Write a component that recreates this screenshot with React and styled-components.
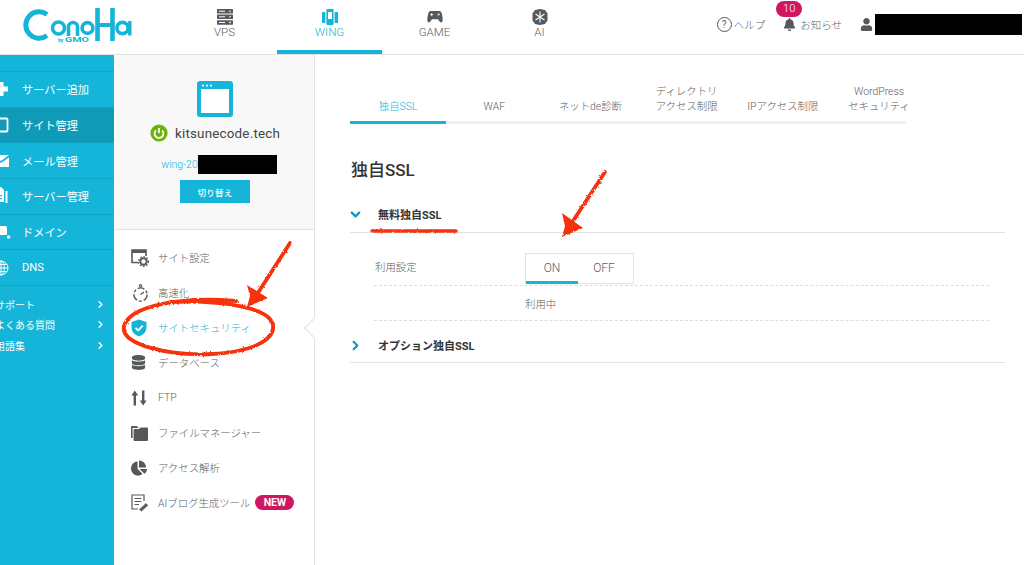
import React from "react";
import styled, { createGlobalStyle } from "styled-components";
import { FaBell, FaUser, FaDatabase, FaChartPie } from "react-icons/fa";
import { FiChevronRight, FiChevronDown } from "react-icons/fi";

const BLUE = "#14b5d8";
const GREY = "#55595c";
const TEXT = "#5c5c5c";

const GlobalStyle = createGlobalStyle`
  html, body {
    margin: 0;
    padding: 0;
    background: #fff;
  }
  body {
    font-family: Roboto, "Noto Sans CJK JP", sans-serif;
    font-weight: 300;
    color: ${TEXT};
  }
  * {
    box-sizing: border-box;
  }
`;

const Logo = () => (
  <LogoSvg viewBox="0 0 110 36" width="110" height="36">
    <g fill="none" stroke={BLUE}>
      <path d="M25 6.5 A13.2 13.2 0 1 0 25 27.5" strokeWidth="5" />
      <circle cx="36.5" cy="20" r="6" strokeWidth="3.6" />
      <path d="M46.5 28 V19 A4.5 4.5 0 0 1 55.5 19 V28" strokeWidth="3.6" />
      <circle cx="65.5" cy="20" r="5.4" strokeWidth="3.6" />
      <path d="M75.5 0 V33 M90.5 0 V33" strokeWidth="4.6" />
      <path d="M75.5 17 H90.5" strokeWidth="4" />
      <circle cx="100.5" cy="20" r="5.6" strokeWidth="3.6" />
      <path d="M107.8 13 V27.5" strokeWidth="3.4" />
    </g>
    <text x="36" y="34" fontSize="5" fontWeight="700" fill={BLUE}>by</text>
    <text x="43" y="34" fontSize="8" fontWeight="700" fill={BLUE} textLength="24" lengthAdjust="spacingAndGlyphs">GMO</text>
  </LogoSvg>
);

const VpsIcon = () => (
  <svg viewBox="0 0 16 16" width="16" height="16" fill={GREY}>
    <rect x="0" y="0" width="16" height="4.5" rx="0.6" />
    <rect x="0" y="5.6" width="16" height="4.5" rx="0.6" />
    <rect x="0" y="11.2" width="16" height="4.5" rx="0.6" />
    <g fill="#fff">
      <rect x="2" y="1.7" width="6" height="1" />
      <rect x="2" y="7.3" width="6" height="1" />
      <rect x="2" y="12.9" width="6" height="1" />
      <circle cx="13" cy="2.2" r="0.8" />
      <circle cx="13" cy="7.8" r="0.8" />
      <circle cx="13" cy="13.4" r="0.8" />
    </g>
  </svg>
);

const WingIcon = () => (
  <svg viewBox="0 0 16 16" width="16" height="16" fill={BLUE}>
    <rect x="0" y="3" width="3.4" height="11" rx="0.8" />
    <rect x="12.6" y="3" width="3.4" height="11" rx="0.8" />
    <path d="M5.4 0 H10.6 A1 1 0 0 1 11.6 1 V15 A1 1 0 0 1 10.6 16 H5.4 A1 1 0 0 1 4.4 15 V1 A1 1 0 0 1 5.4 0 Z M6 3 V10 H10 V3 Z" fillRule="evenodd" />
  </svg>
);

const GameIcon = () => (
  <svg viewBox="0 0 16 14" width="16" height="14" fill={GREY}>
    <path d="M3.6 1 H12.4 C13.8 1 14.5 2.2 15 4.5 C15.6 7.5 16 10 15.4 11.6 C14.9 12.8 13.5 12.6 12.6 11.4 L11 9.3 H5 L3.4 11.4 C2.5 12.6 1.1 12.8 0.6 11.6 C0 10 0.4 7.5 1 4.5 C1.5 2.2 2.2 1 3.6 1 Z" />
    <circle cx="11.6" cy="4.6" r="1" fill="#fff" />
    <path d="M3.2 4.6 H6.2 M4.7 3.1 V6.1" stroke="#fff" strokeWidth="0.9" />
  </svg>
);

const AiIcon = () => (
  <svg viewBox="0 0 16 16" width="16" height="16">
    <path d="M8 0 L13 1 L15.5 4.5 L15.5 11.5 L13 15 L8 16 L3 15 L0.5 11.5 L0.5 4.5 L3 1 Z" fill={GREY} />
    <path d="M8 2.5 V13.5 M3.5 5 L12.5 11 M12.5 5 L3.5 11" stroke="#fff" strokeWidth="1.1" />
  </svg>
);

const WindowIcon = () => (
  <svg viewBox="0 0 36 36" width="36" height="36">
    <rect x="0" y="0" width="36" height="36" rx="3" fill={BLUE} />
    <rect x="4" y="8" width="28" height="24" fill="#fff" />
    <circle cx="6" cy="4.6" r="1.1" fill="#fff" />
    <circle cx="10" cy="4.6" r="1.1" fill="#fff" />
    <circle cx="14" cy="4.6" r="1.1" fill="#fff" />
  </svg>
);

const PowerIcon = () => (
  <svg viewBox="0 0 18 18" width="18" height="18">
    <circle cx="9" cy="9" r="8.6" fill="#6cb30e" />
    <path d="M5.9 6.3 A4.4 4.4 0 1 0 12.1 6.3" fill="none" stroke="#fff" strokeWidth="1.7" />
    <path d="M9 4 V9" stroke="#fff" strokeWidth="1.7" />
  </svg>
);

const SettingIcon = () => (
  <svg viewBox="0 0 18 18" width="18" height="18" fill="none">
    <path d="M7 13.5 H1 V1 H15 V7" stroke={GREY} strokeWidth="1.6" />
    <rect x="1" y="1" width="14" height="3" fill={GREY} />
    <circle cx="12.5" cy="12.5" r="3.2" stroke={GREY} strokeWidth="2" />
    <circle cx="12.5" cy="12.5" r="4.9" stroke={GREY} strokeWidth="1.3" strokeDasharray="1.6 1.6" />
  </svg>
);

const TimerIcon = () => (
  <svg viewBox="0 0 18 18" width="18" height="18" fill="none" stroke={GREY}>
    <circle cx="9.5" cy="10.5" r="6.6" strokeWidth="1.4" strokeDasharray="7 2 3 2" />
    <path d="M9.5 10.5 L13 8" strokeWidth="1.5" />
    <circle cx="9.5" cy="1.8" r="1.2" strokeWidth="1.1" />
  </svg>
);

const ShieldIcon = () => (
  <svg viewBox="0 0 16 18" width="16" height="18">
    <path d="M8 0.5 L15.5 3 V8.5 C15.5 13 12 16 8 17.5 C4 16 0.5 13 0.5 8.5 V3 Z" fill={BLUE} />
    <path d="M4.5 8.8 L7.2 11.4 L11.8 6.6" fill="none" stroke="#fff" strokeWidth="1.8" />
  </svg>
);

const UpDownIcon = () => (
  <svg viewBox="0 0 16 16" width="16" height="16" fill={GREY}>
    <path d="M3.8 0.5 L7.2 5.5 H5 V15.5 H2.6 V5.5 H0.4 Z" />
    <path d="M12.2 15.5 L8.8 10.5 H11 V0.5 H13.4 V10.5 H15.6 Z" />
  </svg>
);

const FolderIcon = () => (
  <svg viewBox="0 0 17 16" width="17" height="16" fill={GREY}>
    <path d="M0 2 A1 1 0 0 1 1 1 H6 L7.5 3 H1.6 V13 H0 Z" />
    <path d="M2.6 5 A1 1 0 0 1 3.6 4 H8 L9.5 2.5 H16 A1 1 0 0 1 17 3.5 V15 A1 1 0 0 1 16 16 H3.6 A1 1 0 0 1 2.6 15 Z" />
  </svg>
);

const BlogIcon = () => (
  <svg viewBox="0 0 18 18" width="18" height="18" fill="none" stroke={GREY}>
    <path d="M13 7 V1 H1 V15 H7" strokeWidth="1.2" />
    <path d="M3.5 4.5 H10.5 M3.5 7.5 H10.5 M3.5 10.5 H8" strokeWidth="1.2" />
    <path d="M8.5 15.5 L15 9.5 L16.8 11.3 L10.3 17.2 Z" fill={GREY} strokeWidth="0.6" />
  </svg>
);

const PlusIcon = () => (
  <svg viewBox="0 0 16 16" width="16" height="16" fill="#fff">
    <path d="M5.5 1 H10.5 V5.5 H15 V10.5 H10.5 V15 H5.5 V10.5 H1 V5.5 H5.5 Z" />
  </svg>
);

const SiteIcon = () => (
  <svg viewBox="0 0 16 16" width="16" height="16" fill="none" stroke="#fff" strokeWidth="1.8">
    <rect x="1.5" y="1.5" width="13" height="13" rx="1" />
  </svg>
);

const MailIcon = () => (
  <svg viewBox="0 0 16 14" width="16" height="14" fill="#fff">
    <path d="M0 2 H16 L8 8 Z" transform="translate(0 -1)" />
    <path d="M0 3.5 L8 9 L16 3.5 V13 H0 Z" />
  </svg>
);

const ServerIcon = () => (
  <svg viewBox="0 0 16 18" width="16" height="18" fill="#fff">
    <path d="M0 0 H8 L11 3 V15 H0 Z" />
    <rect x="2" y="8" width="7" height="1.2" fill={BLUE} />
    <rect x="2" y="11" width="7" height="1.2" fill={BLUE} />
    <rect x="12.5" y="4" width="2" height="12" />
  </svg>
);

const DomainIcon = () => (
  <svg viewBox="0 0 18 16" width="18" height="16" fill="#fff">
    <rect x="0" y="2" width="14" height="9" rx="1.5" />
    <circle cx="15.6" cy="13" r="1.8" />
  </svg>
);

const GlobeIcon = () => (
  <svg viewBox="0 0 16 16" width="16" height="16" fill="none" stroke="#fff" strokeWidth="1">
    <circle cx="8" cy="8" r="7" />
    <ellipse cx="8" cy="8" rx="3.2" ry="7" />
    <path d="M1 8 H15 M2 4.5 H14 M2 11.5 H14 M8 1 V15" />
  </svg>
);

const mainItems = [
  { label: "サーバー追加", icon: <PlusIcon /> },
  { label: "サイト管理", icon: <SiteIcon />, active: true },
  { label: "メール管理", icon: <MailIcon /> },
  { label: "サーバー管理", icon: <ServerIcon /> },
  { label: "ドメイン", icon: <DomainIcon /> },
  { label: "DNS", icon: <GlobeIcon /> },
];

const subLinks = ["サポート", "よくある質問", "用語集"];

const panelItems = [
  { label: "サイト設定", icon: <SettingIcon /> },
  { label: "高速化", icon: <TimerIcon /> },
  { label: "サイトセキュリティ", icon: <ShieldIcon />, active: true },
  { label: "データベース", icon: <FaDatabase size={15} color={GREY} /> },
  { label: "FTP", icon: <UpDownIcon /> },
  { label: "ファイルマネージャー", icon: <FolderIcon /> },
  { label: "アクセス解析", icon: <FaChartPie size={16} color={GREY} /> },
  { label: "AIブログ生成ツール", icon: <BlogIcon />, isNew: true },
];

const topTabs = [
  { label: "VPS", icon: <VpsIcon /> },
  { label: "WING", icon: <WingIcon />, active: true },
  { label: "GAME", icon: <GameIcon /> },
  { label: "AI", icon: <AiIcon /> },
];

const contentTabs = [
  { label: "独自SSL", active: true },
  { label: "WAF" },
  { label: "ネットde診断" },
  { label: "ディレクトリ\nアクセス制限" },
  { label: "IPアクセス制限" },
  { label: "WordPress\nセキュリティ" },
];

const Annotations = () => (
  <Overlay viewBox="0 0 1024 565" width="1024" height="565">
    <defs>
      <filter id="rough" x="-5%" y="-5%" width="110%" height="110%">
        <feTurbulence type="fractalNoise" baseFrequency="0.35" numOctaves="2" seed="4" />
        <feDisplacementMap in="SourceGraphic" scale="2.5" />
      </filter>
    </defs>
    <g filter="url(#rough)">
      <g fill="none" stroke="#f6310f" strokeLinecap="round">
        <path d="M290 243 L256 296" strokeWidth="3.8" />
        <path d="M605 172 L573 221" strokeWidth="3.8" />
        <path d="M372 231 L456 231" strokeWidth="3.4" />
        <path d="M236 301 C180 296 130 306 124 326 C120 345 170 356 212 354 C252 352 275 340 273 325 C270 308 225 300 170 302" strokeWidth="3.8" />
      </g>
      <g fill="#f6310f">
        <path d="M247 285 L268 298 L247 307 L250 296 Z" />
        <path d="M562 213 L583 228 L562 237 L565 226 Z" />
      </g>
    </g>
  </Overlay>
);

const App = () => (
  <Page>
    <GlobalStyle />
    <Header>
      <LogoBox>
        <Logo />
      </LogoBox>
      <TopTabs>
        {topTabs.map((tab) => (
          <TopTab key={tab.label} $active={tab.active}>
            <TopIcon>{tab.icon}</TopIcon>
            {tab.label}
          </TopTab>
        ))}
      </TopTabs>
      <HeaderRight>
        <HeaderLink $gap={2} $right={18}>
          <HelpMark>?</HelpMark>
          ヘルプ
        </HeaderLink>
        <HeaderLink $gap={4} $right={18}>
          <Badge>10</Badge>
          <FaBell size={13} color={GREY} />
          お知らせ
        </HeaderLink>
        <UserBox>
          <FaUser size={13} color={GREY} />
          <Redacted $width={147} $height={21} />
        </UserBox>
      </HeaderRight>
    </Header>
    <Body>
      <Sidebar>
        <MainMenu>
          {mainItems.map((item) => (
            <MainItem key={item.label} $active={item.active}>
              <MainIcon>{item.icon}</MainIcon>
              {item.label}
            </MainItem>
          ))}
        </MainMenu>
        <SubMenu>
          {subLinks.map((link) => (
            <SubItem key={link}>
              {link}
              <FiChevronRight size={11} strokeWidth={3} />
            </SubItem>
          ))}
        </SubMenu>
      </Sidebar>
      <Panel>
        <PanelTop>
          <WindowIcon />
          <SiteName>
            <PowerIcon />
            kitsunecode.tech
          </SiteName>
          <Contract>
            wing-20
            <Redacted $width={79} $height={19} />
          </Contract>
          <SwitchButton>切り替え</SwitchButton>
        </PanelTop>
        <PanelNav>
          {panelItems.map((item) => (
            <PanelItem key={item.label} $active={item.active}>
              <PanelIcon>{item.icon}</PanelIcon>
              {item.label}
              {item.isNew && <NewTag>NEW</NewTag>}
              {item.active && <Caret />}
            </PanelItem>
          ))}
        </PanelNav>
      </Panel>
      <Content>
        <ContentTabs>
          {contentTabs.map((tab) => (
            <ContentTab key={tab.label} $active={tab.active}>
              {tab.label}
            </ContentTab>
          ))}
        </ContentTabs>
        <Title>独自SSL</Title>
        <AccordionHead>
          <AccordionIcon>
            <FiChevronDown size={15} strokeWidth={3.5} />
          </AccordionIcon>
          無料独自SSL
        </AccordionHead>
        <Row $height={53} $paddingTop={20}>
          <RowLabel>利用設定</RowLabel>
          <Toggle>
            <ToggleOption $active>ON</ToggleOption>
            <ToggleOption>OFF</ToggleOption>
          </Toggle>
        </Row>
        <Row $height={35} $center>
          <RowLabel />
          <RowValue>利用中</RowValue>
        </Row>
        <AccordionHead $second>
          <AccordionIcon>
            <FiChevronRight size={15} strokeWidth={3.5} />
          </AccordionIcon>
          オプション独自SSL
        </AccordionHead>
      </Content>
    </Body>
    <Annotations />
  </Page>
);

export default App;

const Page = styled.div`
  position: relative;
  width: 1024px;
  height: 565px;
  overflow: hidden;
  background: #fff;
`;

const Header = styled.header`
  display: flex;
  height: 55px;
  border-bottom: 1px solid #e2e2e2;
`;

const LogoBox = styled.div`
  width: 172px;
  padding: 8px 0 0 22px;
`;

const LogoSvg = styled.svg`
  display: block;
`;

const TopTabs = styled.nav`
  display: flex;
`;

const TopTab = styled.div`
  width: 105px;
  height: 54px;
  padding-top: 8px;
  display: flex;
  flex-direction: column;
  align-items: center;
  font-size: 11.5px;
  line-height: 15px;
  color: ${({ $active }) => ($active ? BLUE : TEXT)};
  border-bottom: 4px solid ${({ $active }) => ($active ? BLUE : "transparent")};
`;

const TopIcon = styled.div`
  height: 17px;
  display: flex;
  align-items: center;
`;

const HeaderRight = styled.div`
  margin-left: auto;
  display: flex;
  align-items: center;
  height: 50px;
  padding: 0 2px 2px 0;
  font-size: 10.5px;
`;

const HeaderLink = styled.div`
  position: relative;
  display: flex;
  align-items: center;
  gap: ${({ $gap }) => $gap}px;
  margin-right: ${({ $right }) => $right}px;
`;

const HelpMark = styled.span`
  width: 15px;
  height: 15px;
  border: 1.3px solid #555;
  border-radius: 50%;
  display: flex;
  align-items: center;
  justify-content: center;
  font-size: 10px;
  font-weight: 400;
`;

const Badge = styled.span`
  position: absolute;
  left: -7px;
  top: -16px;
  width: 26px;
  height: 16px;
  border-radius: 8px;
  background: #cf1662;
  color: #fff;
  text-align: center;
  line-height: 16px;
  font-size: 11px;
`;

const UserBox = styled.div`
  display: flex;
  align-items: center;
  gap: 2px;
`;

const Redacted = styled.span`
  display: inline-block;
  width: ${({ $width }) => $width}px;
  height: ${({ $height }) => $height}px;
  background: #000;
`;

const Body = styled.div`
  display: flex;
  height: 510px;
`;

const Sidebar = styled.aside`
  width: 115px;
  flex-shrink: 0;
  padding-top: 16px;
  background: ${BLUE};
  border-right: 1px solid #fff;
  overflow: hidden;
  font-weight: 400;
`;

const MainMenu = styled.div`
  border-top: 1px solid #11a3c3;
`;

const MainItem = styled.div`
  height: 35.7px;
  margin-left: -7px;
  display: flex;
  align-items: center;
  font-size: 11.2px;
  color: #fff;
  background: ${({ $active }) => ($active ? "#0f9ab8" : "transparent")};
  border-bottom: 1px solid #11a3c3;
`;

const MainIcon = styled.span`
  width: 29px;
  display: flex;
  align-items: center;
`;

const SubMenu = styled.div`
  margin: 8px 0 0 -5px;
  display: flex;
  flex-direction: column;
`;

const SubItem = styled.div`
  height: 20.5px;
  padding-right: 8px;
  display: flex;
  align-items: center;
  justify-content: space-between;
  font-size: 10px;
  color: #fff;
`;

const Panel = styled.div`
  width: 200px;
  flex-shrink: 0;
  border-right: 1px solid #e2e2e2;
`;

const PanelTop = styled.div`
  height: 175px;
  padding-top: 26px;
  padding-left: 1px;
  display: flex;
  flex-direction: column;
  align-items: center;
  background: #f8f8f8;
  border-bottom: 1px solid #e2e2e2;
`;

const SiteName = styled.div`
  margin-top: 7px;
  display: flex;
  align-items: center;
  gap: 7px;
  font-size: 13.4px;
  font-weight: 400;
  letter-spacing: 0.2px;
  color: #444;
`;

const Contract = styled.div`
  margin-top: 13px;
  margin-left: 8px;
  display: flex;
  align-items: center;
  font-size: 10.5px;
  color: ${BLUE};
`;

const SwitchButton = styled.div`
  width: 70px;
  height: 23px;
  margin-top: 6px;
  background: ${BLUE};
  color: #fff;
  display: flex;
  align-items: center;
  justify-content: center;
  font-size: 8.5px;
  font-weight: 500;
  letter-spacing: 0.3px;
`;

const PanelNav = styled.nav`
  padding-top: 10px;
`;

const PanelItem = styled.div`
  position: relative;
  height: 35px;
  padding-left: 16px;
  display: flex;
  align-items: center;
  font-size: 10.4px;
  color: ${({ $active }) => ($active ? BLUE : TEXT)};
`;

const PanelIcon = styled.span`
  width: 27px;
  display: flex;
  align-items: center;
`;

const NewTag = styled.span`
  width: 39px;
  height: 15px;
  margin-left: 5px;
  border-radius: 8px;
  background: #cf1662;
  color: #fff;
  font-size: 10.5px;
  font-weight: 700;
  text-align: center;
  line-height: 15px;
`;

const Caret = styled.span`
  position: absolute;
  right: -7px;
  top: 10.5px;
  width: 14px;
  height: 14px;
  background: #fff;
  border-left: 1px solid #e2e2e2;
  border-bottom: 1px solid #e2e2e2;
  transform: rotate(45deg);
`;

const Content = styled.main`
  flex: 1;
  padding: 0 19px 0 35px;
`;

const ContentTabs = styled.div`
  width: 556px;
  height: 69px;
  padding-top: 26px;
  display: flex;
  border-bottom: 3px solid #f0f0f0;
`;

const ContentTab = styled.div`
  width: 96.2px;
  height: 43px;
  flex-shrink: 0;
  padding-bottom: 7px;
  display: flex;
  align-items: flex-end;
  justify-content: center;
  font-size: 10.4px;
  line-height: 15px;
  text-align: center;
  white-space: pre-line;
  color: ${({ $active }) => ($active ? BLUE : TEXT)};
  border-bottom: 3px solid ${({ $active }) => ($active ? BLUE : "transparent")};
`;

const Title = styled.h2`
  margin: 36px 0 0 1px;
  font-size: 17px;
  line-height: 20px;
  font-weight: 500;
  color: #333;
`;

const AccordionHead = styled.div`
  height: ${({ $second }) => ($second ? "42px" : "37px")};
  margin-top: ${({ $second }) => ($second ? "0" : "16px")};
  padding-top: ${({ $second }) => ($second ? "7px" : "0")};
  display: flex;
  align-items: center;
  font-size: 11px;
  font-weight: 700;
  color: #333;
  border-bottom: 1px solid #e2e2e2;
`;

const AccordionIcon = styled.span`
  width: 30px;
  margin-left: -2px;
  display: flex;
  color: #0f9ab8;
`;

const Row = styled.div`
  width: 615px;
  height: ${({ $height }) => $height}px;
  margin-left: 24px;
  padding-top: ${({ $paddingTop }) => $paddingTop || 0}px;
  display: flex;
  align-items: ${({ $center }) => ($center ? "center" : "flex-start")};
  font-size: 10.4px;
  border-bottom: 1px dashed #ddd;
`;

const RowLabel = styled.div`
  width: 151px;
  padding-left: 1px;
  line-height: 30px;
`;

const RowValue = styled.div``;

const Toggle = styled.div`
  width: 109px;
  height: 31px;
  display: flex;
  border: 1px solid #e2e2e2;
`;

const ToggleOption = styled.div`
  width: 52px;
  height: 30px;
  display: flex;
  align-items: center;
  justify-content: center;
  font-size: 12px;
  border-bottom: 3px solid ${({ $active }) => ($active ? BLUE : "transparent")};
`;

const Overlay = styled.svg`
  position: absolute;
  left: 0;
  top: 0;
  pointer-events: none;
`;
